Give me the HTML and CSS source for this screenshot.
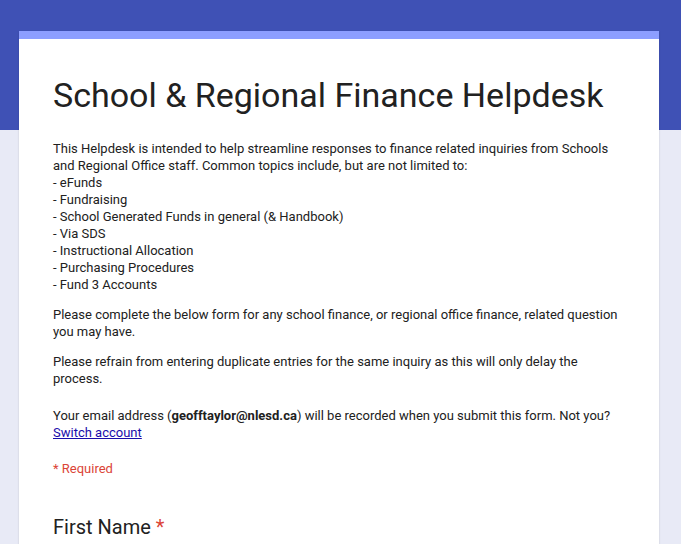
FILE: index.html
```html
<!DOCTYPE html>
<html>
<head>
<meta charset="utf-8">
<link rel="stylesheet" href="styles.css">
</head>
<body>
<div class="page">
  <div class="card">
    <h1 class="title">School &amp; Regional Finance Helpdesk</h1>
    <div class="desc">
      <p>This Helpdesk is intended to help streamline responses to finance related inquiries from Schools and Regional Office staff. Common topics include, but are not limited to:<br>- eFunds<br>- Fundraising<br>- School Generated Funds in general (&amp; Handbook)<br>- Via SDS<br>- Instructional Allocation<br>- Purchasing Procedures<br>- Fund 3 Accounts</p>
      <p>Please complete the below form for any school finance, or regional office finance, related question you may have.</p>
      <p>Please refrain from entering duplicate entries for the same inquiry as this will only delay the process.</p>
    </div>
    <div class="email">Your email address (<b>geofftaylor@nlesd.ca</b>) will be recorded when you submit this form. Not you?<br><a class="switch" href="#">Switch account</a></div>
    <div class="required">* Required</div>
    <div class="question">First Name <span class="star">*</span></div>
  </div>
</div>
</body>
</html>
```
FILE: styles.css
```css
html, body { margin: 0; padding: 0; }
body {
  background: linear-gradient(#3f51b5 0, #3f51b5 130px, #e8eaf6 130px);
  height: 544px;
  overflow: hidden;
  font-family: Roboto, "Liberation Sans", sans-serif;
  color: #212121;
}
.page { padding: 31px 0 0 19px; }
.card {
  width: 640px;
  box-sizing: border-box;
  background: #fff;
  border-top: 8px solid #8c9eff;
  padding: 36px 34px 40px;
  min-height: 600px;
  box-shadow: 0 1px 2px rgba(0,0,0,0.15);
}
.title {
  margin: 0;
  font-size: 34px;
  line-height: 40px;
  font-weight: 400;
  color: #212121;
}
.desc { margin-top: 25px; font-size: 13px; line-height: 17px; }
.desc p { margin: 0 0 13px; }
.email { margin-top: 20px; font-size: 13px; line-height: 17px; }
.switch { color: #1a0dab; }
.required { margin-top: 19px; font-size: 13px; line-height: 17px; color: #db4437; }
.question { margin-top: 38px; font-size: 20px; line-height: 24px; color: #212121; }
.star { color: #db4437; }
```
